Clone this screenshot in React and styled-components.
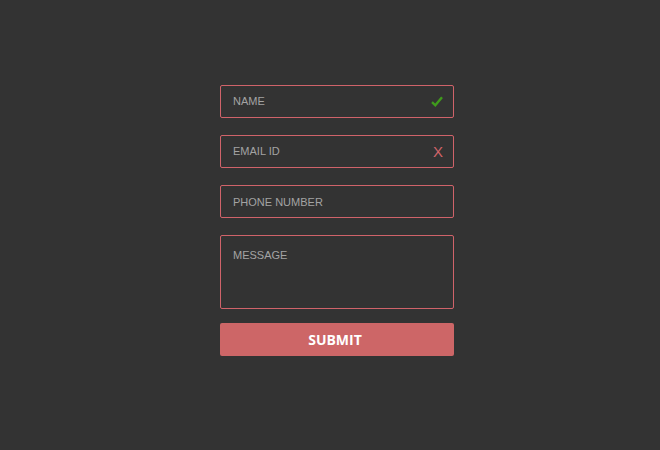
import React from "react";
import styled, { createGlobalStyle } from "styled-components";

const Global = createGlobalStyle`
  html, body { margin: 0; padding: 0; background: #333333; }
  body { width: 660px; height: 450px; overflow: hidden; font-family: "Liberation Sans", Arial, sans-serif; }
`;

const Page = styled.div`
  width: 660px;
  height: 450px;
  display: flex;
  justify-content: center;
  padding: 85px 0 0 14px;
  box-sizing: border-box;
`;

const Form = styled.form`
  width: 234px;
  display: flex;
  flex-direction: column;
`;

const Field = styled.div`
  position: relative;
  height: ${(p) => p.$h || 33}px;
  margin-bottom: ${(p) => p.$mb ?? 17}px;
  border: 1px solid #d0636a;
  border-radius: 2px;
  box-sizing: border-box;
  display: flex;
  align-items: ${(p) => (p.$top ? "flex-start" : "center")};
  padding: ${(p) => (p.$top ? "13px 12px 0 12px" : `0 12px ${p.$shift ?? 2}px 12px`)};
`;

const Label = styled.span`
  font-size: 11px;
  color: #a3a3a3;
`;

const Status = styled.span`
  position: absolute;
  right: 10px;
  top: 50%;
  transform: translateY(-55%);
  display: flex;
  align-items: center;
  color: ${(p) => p.$color};
  font-size: 15px;
  font-family: "Liberation Sans", Arial, sans-serif;
`;

const Submit = styled.button`
  height: 33px;
  border: none;
  border-radius: 2px;
  background: #cd6667;
  color: #ffffff;
  font-family: "Open Sans", "Noto Sans", sans-serif;
  font-weight: 700;
  font-size: 14px;
  padding: 0 4px 0 0;
  cursor: pointer;
`;

export default function App() {
  return (
    <>
      <Global />
      <Page>
        <Form onSubmit={(e) => e.preventDefault()}>
          <Field $mb={17}>
            <Label>NAME</Label>
            <Status $color="#3f9a1c">
              <svg width="12" height="11" viewBox="0 0 12 11">
                <path d="M1 6.2 L4.3 9.3 L11 1.2" fill="none" stroke="#3f9a1c" strokeWidth="2.4" strokeLinejoin="miter" />
              </svg>
            </Status>
          </Field>
          <Field $mb={17}>
            <Label>EMAIL ID</Label>
            <Status $color="#d0646a">X</Status>
          </Field>
          <Field $mb={17} $shift={0}>
            <Label>PHONE NUMBER</Label>
          </Field>
          <Field $h={74} $mb={14} $top>
            <Label>MESSAGE</Label>
          </Field>
          <Submit type="submit">SUBMIT</Submit>
        </Form>
      </Page>
    </>
  );
}
